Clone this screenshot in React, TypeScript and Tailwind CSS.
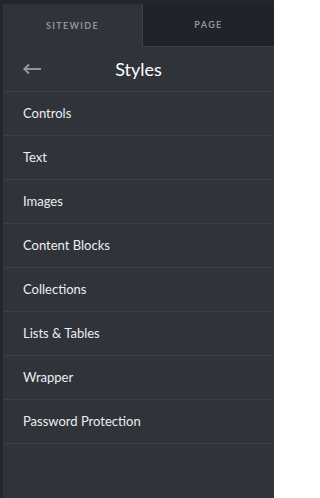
const ITEMS = [
  'Controls',
  'Text',
  'Images',
  'Content Blocks',
  'Collections',
  'Lists & Tables',
  'Wrapper',
  'Password Protection',
]

function BackArrow() {
  return (
    <svg
      className="absolute left-[20px] h-[12px] w-[18px]"
      viewBox="0 0 18 12"
      fill="none"
      stroke="#9a9da3"
      strokeWidth={1.8}
    >
      <path d="M1 6H18" />
      <path d="M6 1.5L1.3 6L6 10.5" />
    </svg>
  )
}

export default function App() {
  return (
    <div className="h-[498px] w-[274px] overflow-hidden bg-[#23262b] pt-[4px] pl-[3px] font-['Lato',sans-serif]">
      <div className="flex h-full flex-col bg-[#30333a]">
        <div className="flex h-[43px]">
          <div className="flex w-[139px] items-center justify-center text-[9px] font-bold tracking-[0.15em] text-[#8f949c]">
            SITEWIDE
          </div>
          <div className="flex flex-1 items-center justify-center border-b border-l border-[#3d4048] bg-[#212328] text-[9px] font-bold tracking-[0.15em] text-[#8f949c]">
            PAGE
          </div>
        </div>
        <div className="relative flex h-[45px] items-center justify-center border-b border-[#3b3e46]">
          <BackArrow />
          <span className="text-[18px] text-white">Styles</span>
        </div>
        {ITEMS.map((item) => (
          <div
            key={item}
            className="flex h-[44px] items-center border-b border-[#3b3e46] pl-[20px] text-[13px] text-[#eceef0]"
          >
            {item}
          </div>
        ))}
      </div>
    </div>
  )
}
